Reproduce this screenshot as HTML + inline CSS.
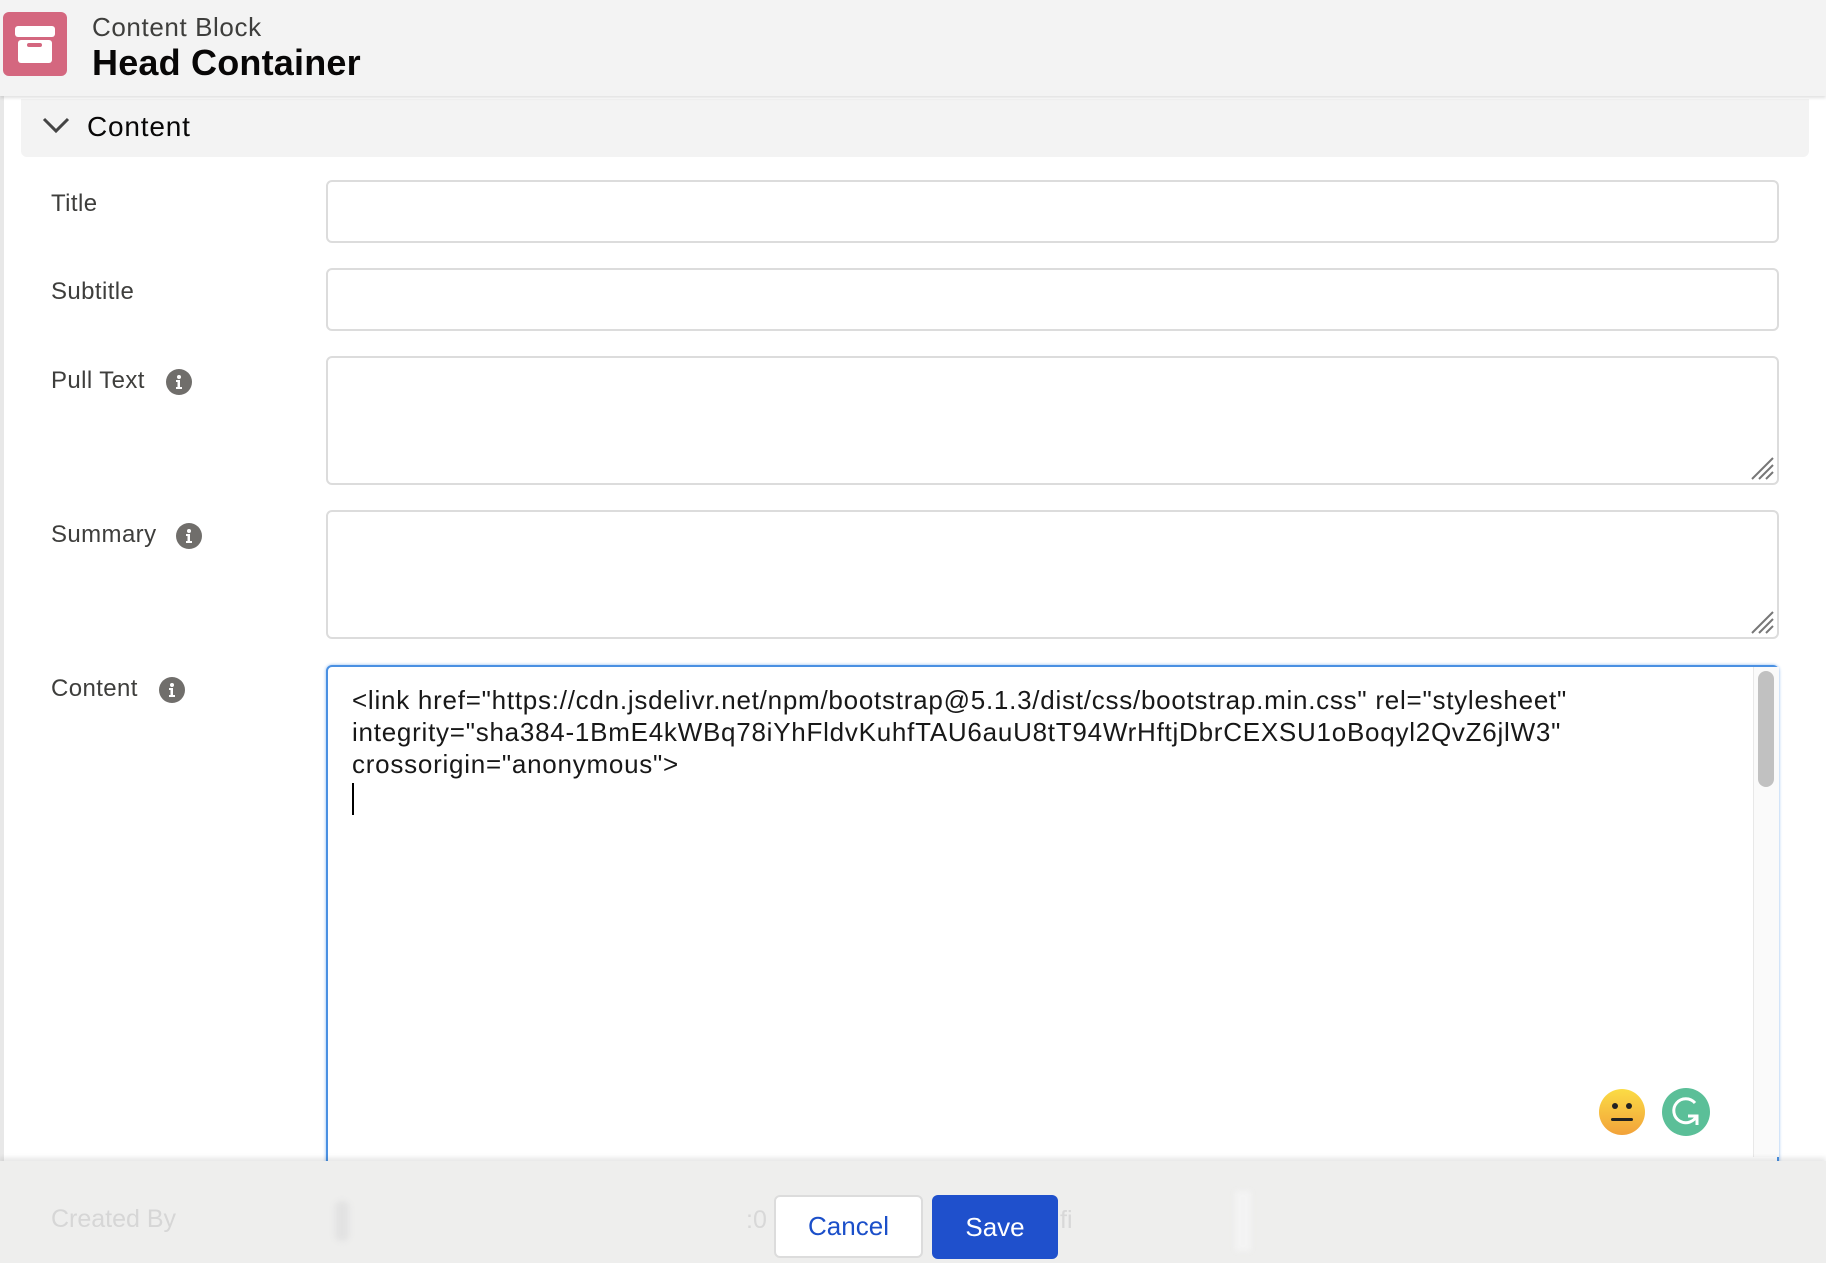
<!DOCTYPE html>
<html><head><meta charset="utf-8">
<style>
*{box-sizing:border-box;margin:0;padding:0}
html,body{width:1826px;height:1263px;overflow:hidden;background:#fff;font-family:"Liberation Sans",Arial,sans-serif;color:#181818}
.abs{position:absolute}
.hdr{left:0;top:0;width:1826px;height:96px;background:#f3f3f3;box-shadow:0 2px 3px rgba(0,0,0,.12);z-index:3}
.leftline{left:0;top:96px;width:4px;height:1080px;background:#e8e8e8}
.sec{left:21px;top:99px;width:1788px;height:58px;background:#f3f3f3;border-radius:0 0 6px 6px}
.lbl{left:51px;font-size:24px;letter-spacing:0.4px;color:#3e3e3c}
.inp{left:326px;width:1453px;border:2px solid #dcdcdc;border-radius:6px;background:#fff}
.info{width:26px;height:26px}
.grip{position:absolute;right:3px;bottom:3px;width:24px;height:24px}
</style></head><body>
<div class="abs hdr">
  <div class="abs" style="left:3px;top:12px;width:64px;height:64px;background:#d4677f;border-radius:6px"></div>
  <div class="abs" style="left:15px;top:26px;width:40px;height:11px;background:#fff;border-radius:3px"></div>
  <div class="abs" style="left:18px;top:40px;width:34px;height:23px;background:#fff;border-radius:3px"></div>
  <div class="abs" style="left:27px;top:43px;width:15px;height:4px;background:#d4677f;border-radius:2px"></div>
  <div class="abs" style="left:92px;top:12px;font-size:26px;letter-spacing:0.6px;color:#3e3e3c">Content Block</div>
  <div class="abs" style="left:92px;top:42px;font-size:36px;font-weight:bold;letter-spacing:0.2px;color:#080707">Head Container</div>
</div>
<div class="abs leftline"></div>
<div class="abs sec">
  <svg class="abs" style="left:20px;top:17px" width="30" height="20" viewBox="0 0 30 20"><path d="M3 3 L15 15 L27 3" fill="none" stroke="#444" stroke-width="3"/></svg>
  <div class="abs" style="left:66px;top:12px;font-size:28px;letter-spacing:0.8px;color:#080707">Content</div>
</div>

<div class="abs lbl" style="top:190px">Title</div>
<div class="abs lbl" style="top:278px">Subtitle</div>
<div class="abs lbl" style="top:367px">Pull Text</div>
<div class="abs lbl" style="top:521px">Summary</div>
<div class="abs lbl" style="top:675px">Content</div>

<svg class="abs info" style="left:166px;top:369px" viewBox="0 0 26 26"><circle cx="13" cy="13" r="13" fill="#706e6b"/><circle cx="13" cy="8" r="2" fill="#fff"/><path d="M10 11h4v7h2v2h-6v-2h1.5v-5H10z" fill="#fff"/></svg>
<svg class="abs info" style="left:176px;top:523px" viewBox="0 0 26 26"><circle cx="13" cy="13" r="13" fill="#706e6b"/><circle cx="13" cy="8" r="2" fill="#fff"/><path d="M10 11h4v7h2v2h-6v-2h1.5v-5H10z" fill="#fff"/></svg>
<svg class="abs info" style="left:159px;top:677px" viewBox="0 0 26 26"><circle cx="13" cy="13" r="13" fill="#706e6b"/><circle cx="13" cy="8" r="2" fill="#fff"/><path d="M10 11h4v7h2v2h-6v-2h1.5v-5H10z" fill="#fff"/></svg>

<div class="abs inp" style="top:180px;height:63px"></div>
<div class="abs inp" style="top:268px;height:63px"></div>
<div class="abs inp" style="top:356px;height:129px"><svg class="grip" viewBox="0 0 24 24"><path d="M23 2L2 23M23 9L9 23M23 16L16 23" stroke="#777" stroke-width="2"/></svg></div>
<div class="abs inp" style="top:510px;height:129px"><svg class="grip" viewBox="0 0 24 24"><path d="M23 2L2 23M23 9L9 23M23 16L16 23" stroke="#777" stroke-width="2"/></svg></div>

<div class="abs inp" style="top:665px;height:520px;border-color:#4a90e2;box-shadow:0 0 3px #8ab8f0">
  <div class="abs" style="left:24px;top:17px;font-size:26px;letter-spacing:0.75px;line-height:32px;color:#181818;white-space:pre">&lt;link href="https://cdn.jsdelivr.net/npm/bootstrap@5.1.3/dist/css/bootstrap.min.css" rel="stylesheet"
integrity="sha384-1BmE4kWBq78iYhFldvKuhfTAU6auU8tT94WrHftjDbrCEXSU1oBoqyl2QvZ6jlW3"
crossorigin="anonymous"&gt;</div>
  <div class="abs" style="left:24px;top:116px;width:2px;height:32px;background:#000"></div>
  <div class="abs" style="left:1425px;top:0;width:26px;height:490px;background:#fafafa;border-left:1px solid #e8e8e8"></div>
  <div class="abs" style="left:1430px;top:4px;width:16px;height:116px;background:#c1c1c1;border-radius:8px"></div>
  <svg class="abs" style="left:1271px;top:422px" width="46" height="46" viewBox="0 0 46 46"><defs><linearGradient id="g" x1="0" y1="0" x2="0" y2="1"><stop offset="0" stop-color="#fbdc45"/><stop offset="1" stop-color="#f2a23a"/></linearGradient></defs><circle cx="23" cy="23" r="23" fill="url(#g)"/><circle cx="16" cy="17" r="3" fill="#222"/><circle cx="30" cy="17" r="3" fill="#222"/><rect x="12" y="29" width="22" height="3" rx="1.5" fill="#222"/></svg>
  <svg class="abs" style="left:1334px;top:421px" width="48" height="48" viewBox="0 0 48 48"><circle cx="24" cy="24" r="24" fill="#5bbf98"/><path d="M33 15A12 12 0 1 0 35 27" fill="none" stroke="#fff" stroke-width="3"/><path d="M26 28h9v9" fill="none" stroke="#fff" stroke-width="3"/></svg>
</div>

<div class="abs" style="left:0;top:1161px;width:1826px;height:102px;background:#eeeeed;box-shadow:0 -3px 5px rgba(0,0,0,.1);z-index:4">
  <div class="abs" style="left:51px;top:44px;font-size:25px;color:#d6d6d6">Created By</div>
  <div class="abs" style="left:335px;top:40px;width:14px;height:40px;background:#e2e2e2;border-radius:6px;filter:blur(3px)"></div>
  <div class="abs" style="left:1235px;top:30px;width:16px;height:60px;background:#f3f3f3;filter:blur(3px)"></div>
  <div class="abs" style="left:746px;top:45px;font-size:25px;color:#d8d8d8">:0</div>
  <div class="abs" style="left:1060px;top:45px;font-size:25px;color:#d8d8d8">fi</div>
  <div class="abs" style="left:774px;top:34px;width:149px;height:63px;background:#fff;border:2px solid #dcdcdc;border-radius:6px;color:#1b4fc9;font-size:26px;text-align:center;line-height:59px">Cancel</div>
  <div class="abs" style="left:932px;top:34px;width:126px;height:64px;background:#1f50cc;border-radius:6px;color:#fff;font-size:26px;text-align:center;line-height:64px">Save</div>
</div>
</body></html>
